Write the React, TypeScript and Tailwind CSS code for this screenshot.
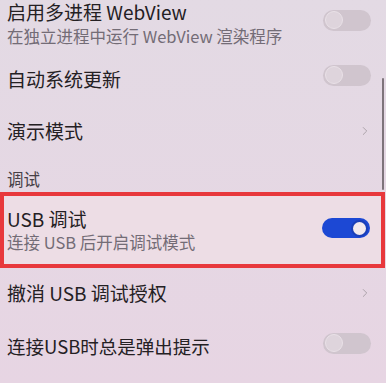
import { ChevronRight } from "lucide-react";

function Toggle({ on = false }: { on?: boolean }) {
  if (on) {
    return (
      <div className="w-[48px] h-[20px] rounded-full bg-[#1c48d4] flex items-center justify-end pr-[2px] flex-shrink-0">
        <div className="w-[17px] h-[17px] rounded-full bg-[#f1e9ee] border-[2px] border-[#1a3fb8]" />
      </div>
    );
  }
  return (
    <div className="w-[48px] h-[21px] rounded-full bg-[#d0c5ce] flex items-center pl-[2px] flex-shrink-0">
      <div className="w-[18px] h-[18px] rounded-full bg-[#ded4dc] border border-[#e9e1e7]" />
    </div>
  );
}

function Chevron() {
  return <ChevronRight className="w-[14px] h-[14px] text-[#a89fa6]" strokeWidth={1.6} />;
}

export default function App() {
  return (
    <div
      className="relative w-[386px] h-[383px] overflow-hidden bg-gradient-to-b from-[#e3dae4] to-[#e7d5e3] text-[#242023]"
      style={{ fontFamily: '"Noto Sans CJK SC", "Noto Sans", sans-serif' }}
    >
      <div className="flex flex-col -mt-[6px]">
        {/* WebView */}
        <div className="h-[58px] flex items-center pl-[7px] pr-[15px]">
          <div className="flex-1 flex flex-col gap-[3px]">
            <span className="text-[19px] leading-[22px]">启用多进程 WebView</span>
            <span className="text-[16.5px] leading-[20px] text-[#736c76]">在独立进程中运行 WebView 渲染程序</span>
          </div>
          <div className="-mt-[6px]">
            <Toggle />
          </div>
        </div>

        <div className="h-[54px] flex items-center pl-[7px] pr-[15px]">
          <span className="flex-1 text-[19px]">自动系统更新</span>
          <div className="-mt-[8px]">
            <Toggle />
          </div>
        </div>

        <div className="h-[50px] flex items-center pl-[7px] pr-[14px]">
          <span className="flex-1 text-[19px]">演示模式</span>
          <Chevron />
        </div>

        <div className="h-[36px] flex items-end pl-[7px] pb-[2px]">
          <span className="text-[16.5px] leading-[22px] text-[#474046]">调试</span>
        </div>

        {/* highlighted */}
        <div className="h-[76px] border-[4px] border-[#e8383c] bg-[#eddde5] flex items-center pl-[3px] pr-[11px] mr-[1px]">
          <div className="flex-1 flex flex-col gap-[2px]">
            <span className="text-[19px] leading-[22px]">USB 调试</span>
            <span className="text-[16.5px] leading-[20px] text-[#736c76]">连接 USB 后开启调试模式</span>
          </div>
          <div className="-mt-[4px]">
            <Toggle on />
          </div>
        </div>

        <div className="h-[50px] flex items-center pl-[7px] pr-[14px]">
          <span className="flex-1 text-[19px]">撤消 USB 调试授权</span>
          <Chevron />
        </div>

        <div className="h-[58px] flex items-center pl-[7px] pr-[15px]">
          <span className="flex-1 text-[18.5px]">连接USB时总是弹出提示</span>
          <div className="-mt-[8px]">
            <Toggle />
          </div>
        </div>
      </div>

      {/* scrollbar */}
      <div className="absolute left-[382px] top-[78px] w-[2px] h-[112px] rounded-full bg-[#7e747b]" />
    </div>
  );
}
